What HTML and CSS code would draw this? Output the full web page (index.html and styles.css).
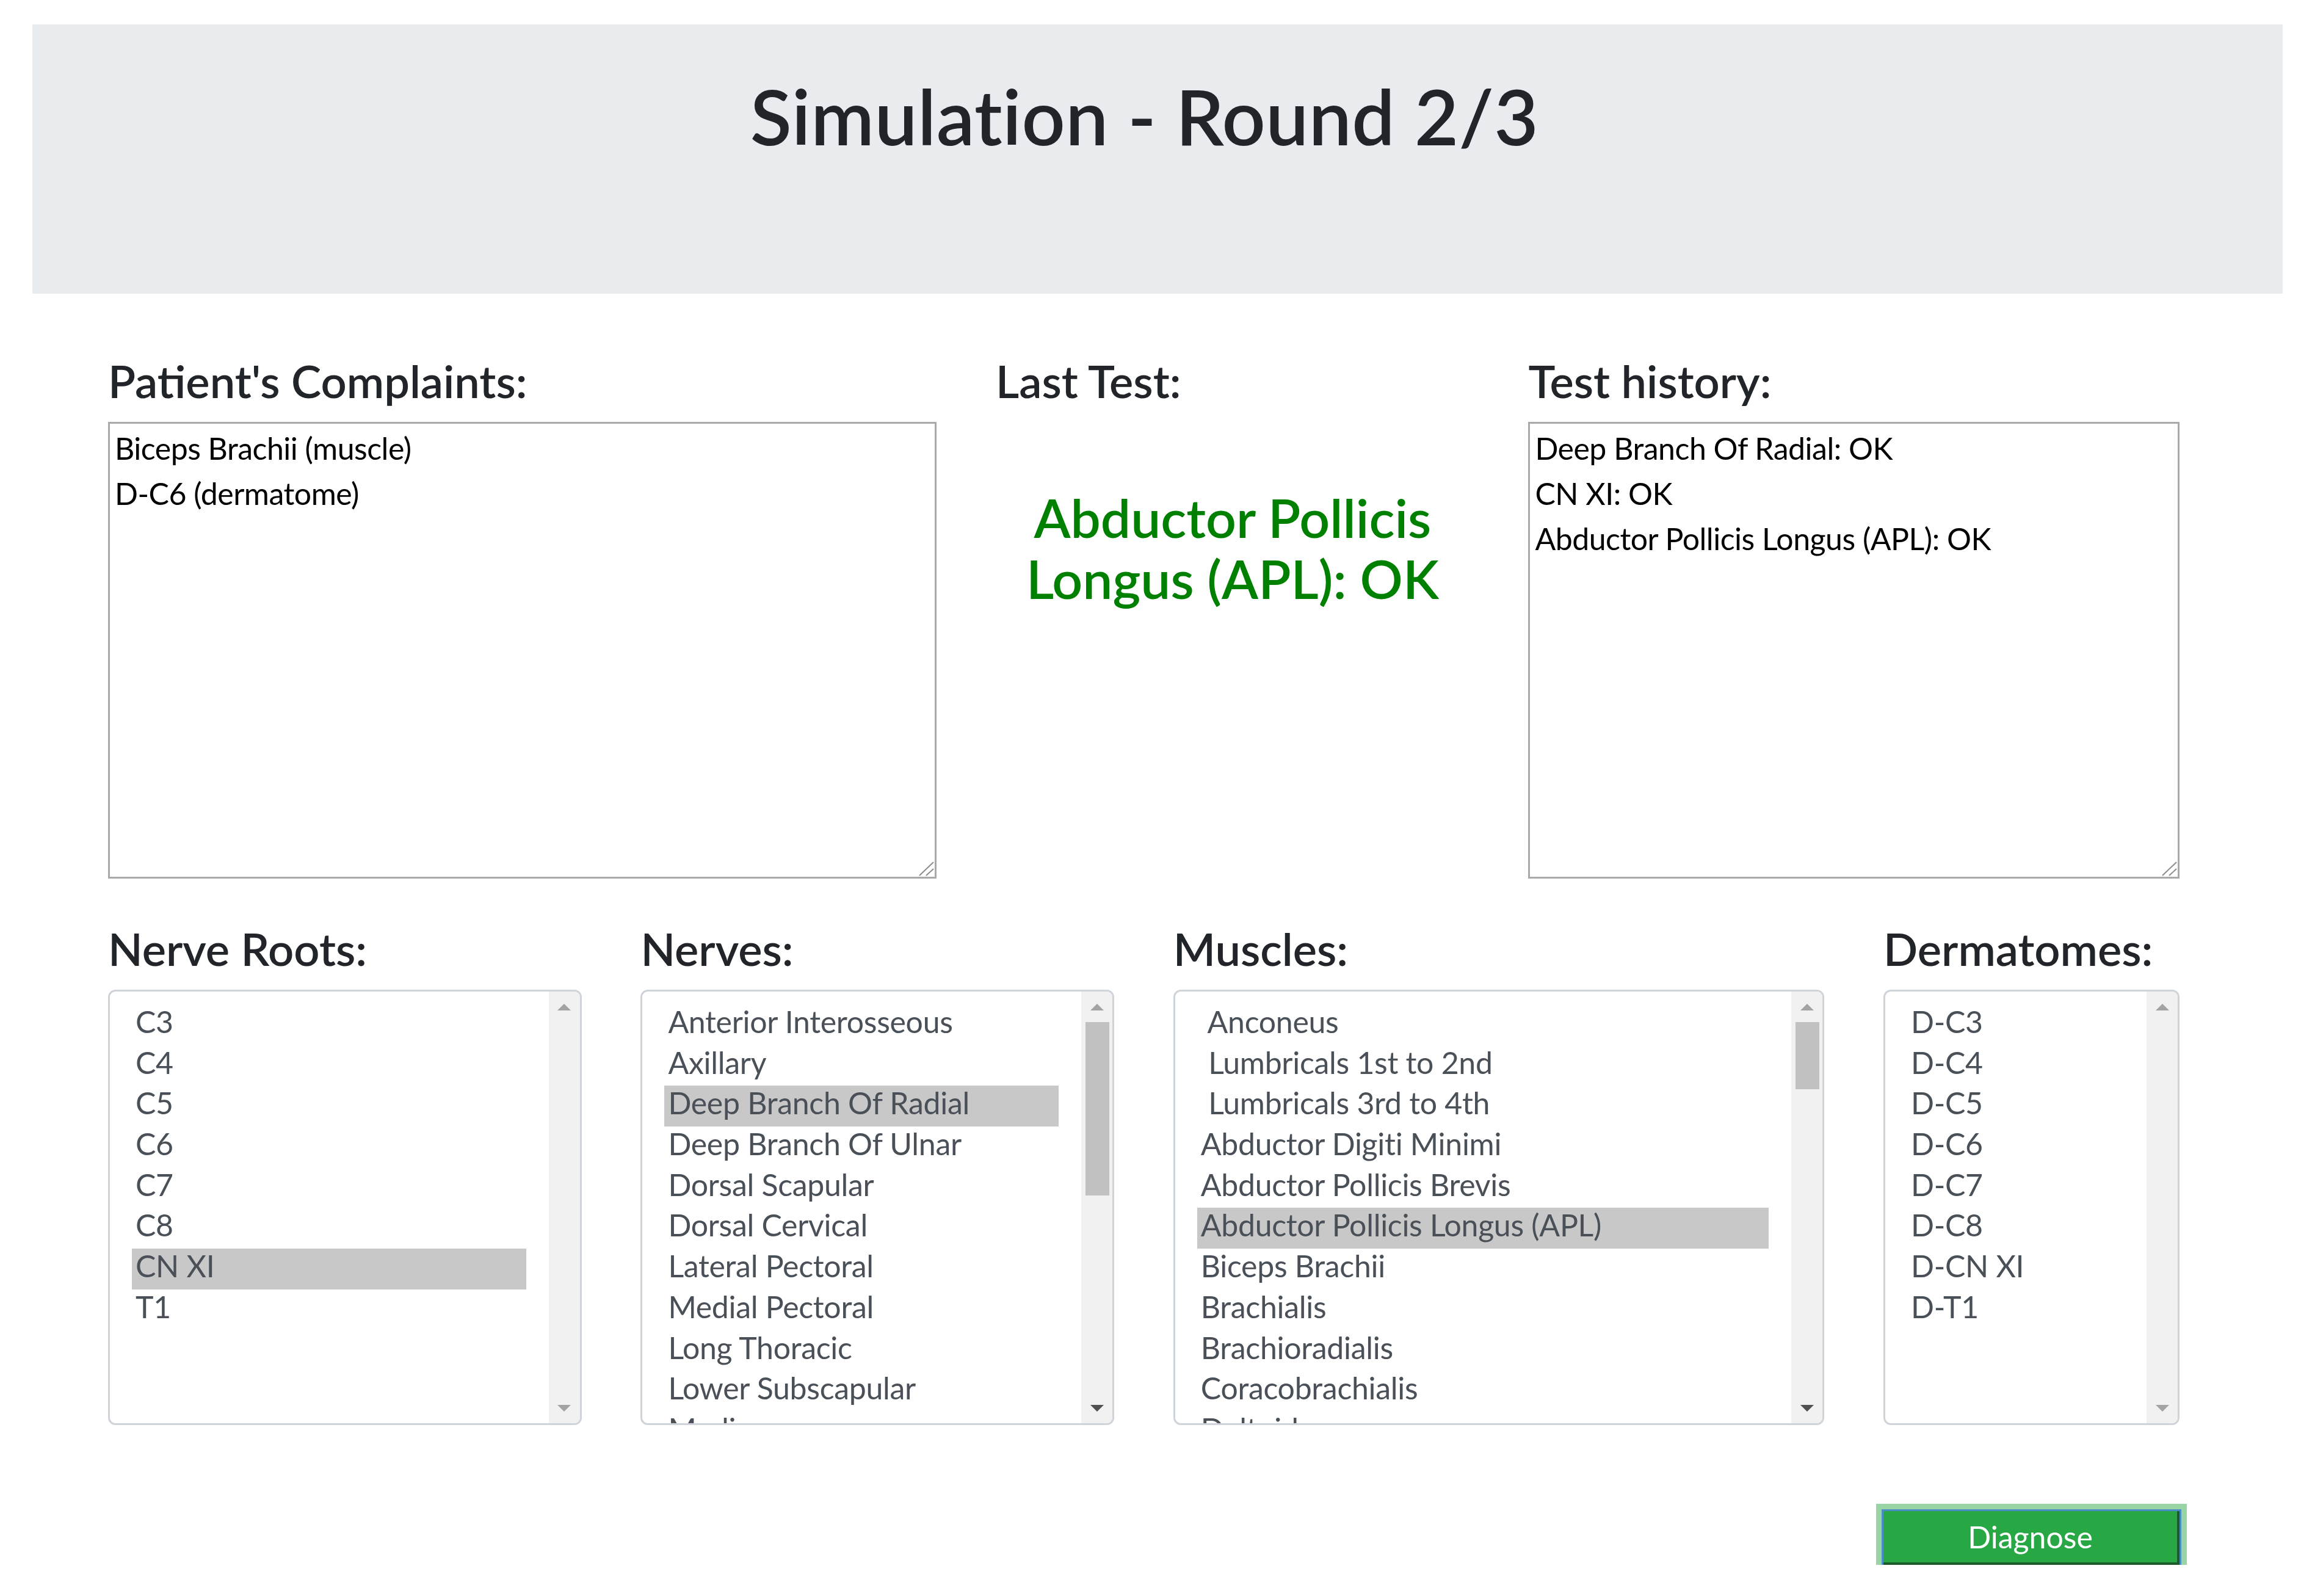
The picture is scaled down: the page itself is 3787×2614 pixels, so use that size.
FILE: index.html
```html
<!DOCTYPE html>
<html lang="en">
<head>
<meta charset="utf-8">
<title>Simulation - Round 2/3</title>
<link rel="stylesheet" href="styles.css">
</head>
<body>
<header class="jumbo">
  <h1 class="title">Simulation - Round 2/3</h1>
</header>
<main class="page">
  <section class="row top">
    <div class="col c5">
      <h4 class="label">Patient's Complaints:</h4>
      <div class="ta-wrap">
        <textarea class="ta" readonly>Biceps Brachii (muscle)
D-C6 (dermatome)</textarea>
        <svg class="grip" width="26" height="24" viewBox="0 0 26 24"><path d="M2 23 L25 1 M13 23 L25 12" stroke="#8c8c8c" stroke-width="2" fill="none"/></svg>
      </div>
    </div>
    <div class="col c3">
      <h4 class="label">Last Test:</h4>
      <p class="last">Abductor Pollicis Longus (APL): OK</p>
    </div>
    <div class="col c4">
      <h4 class="label">Test history:</h4>
      <div class="ta-wrap">
        <textarea class="ta" readonly>Deep Branch Of Radial: OK
CN XI: OK
Abductor Pollicis Longus (APL): OK</textarea>
        <svg class="grip" width="26" height="24" viewBox="0 0 26 24"><path d="M2 23 L25 1 M13 23 L25 12" stroke="#8c8c8c" stroke-width="2" fill="none"/></svg>
      </div>
    </div>
  </section>

  <section class="row lists">
    <div class="col c3">
      <h4 class="label">Nerve Roots:</h4>
      <div class="listbox">
        <div class="opts">
          <div class="opt">C3</div>
          <div class="opt">C4</div>
          <div class="opt">C5</div>
          <div class="opt">C6</div>
          <div class="opt">C7</div>
          <div class="opt">C8</div>
          <div class="opt sel">CN XI</div>
          <div class="opt">T1</div>
        </div>
        <div class="sbar">
          <div class="arrow"><svg width="22" height="11" viewBox="0 0 22 11"><path d="M0 11 L11 0 L22 11Z" fill="#a3a3a3"/></svg></div>
          <div class="arrow down"><svg width="22" height="11" viewBox="0 0 22 11"><path d="M0 0 L11 11 L22 0Z" fill="#a3a3a3"/></svg></div>
        </div>
      </div>
    </div>
    <div class="col c3">
      <h4 class="label">Nerves:</h4>
      <div class="listbox">
        <div class="opts">
          <div class="opt">Anterior Interosseous</div>
          <div class="opt">Axillary</div>
          <div class="opt sel">Deep Branch Of Radial</div>
          <div class="opt">Deep Branch Of Ulnar</div>
          <div class="opt">Dorsal Scapular</div>
          <div class="opt">Dorsal Cervical</div>
          <div class="opt">Lateral Pectoral</div>
          <div class="opt">Medial Pectoral</div>
          <div class="opt">Long Thoracic</div>
          <div class="opt">Lower Subscapular</div>
          <div class="opt">Median</div>
        </div>
        <div class="sbar">
          <div class="arrow"><svg width="22" height="11" viewBox="0 0 22 11"><path d="M0 11 L11 0 L22 11Z" fill="#a3a3a3"/></svg></div>
          <div class="thumb thumb-nerves"></div>
          <div class="arrow down"><svg width="22" height="11" viewBox="0 0 22 11"><path d="M0 0 L11 11 L22 0Z" fill="#505050"/></svg></div>
        </div>
      </div>
    </div>
    <div class="col c4">
      <h4 class="label">Muscles:</h4>
      <div class="listbox">
        <div class="opts">
          <div class="opt">&nbsp;Anconeus</div>
          <div class="opt">&nbsp;Lumbricals 1st to 2nd</div>
          <div class="opt">&nbsp;Lumbricals 3rd to 4th</div>
          <div class="opt">Abductor Digiti Minimi</div>
          <div class="opt">Abductor Pollicis Brevis</div>
          <div class="opt sel">Abductor Pollicis Longus (APL)</div>
          <div class="opt">Biceps Brachii</div>
          <div class="opt">Brachialis</div>
          <div class="opt">Brachioradialis</div>
          <div class="opt">Coracobrachialis</div>
          <div class="opt">Deltoid</div>
        </div>
        <div class="sbar">
          <div class="arrow"><svg width="22" height="11" viewBox="0 0 22 11"><path d="M0 11 L11 0 L22 11Z" fill="#a3a3a3"/></svg></div>
          <div class="thumb thumb-muscles"></div>
          <div class="arrow down"><svg width="22" height="11" viewBox="0 0 22 11"><path d="M0 0 L11 11 L22 0Z" fill="#505050"/></svg></div>
        </div>
      </div>
    </div>
    <div class="col c2">
      <h4 class="label">Dermatomes:</h4>
      <div class="listbox">
        <div class="opts">
          <div class="opt">D-C3</div>
          <div class="opt">D-C4</div>
          <div class="opt">D-C5</div>
          <div class="opt">D-C6</div>
          <div class="opt">D-C7</div>
          <div class="opt">D-C8</div>
          <div class="opt">D-CN XI</div>
          <div class="opt">D-T1</div>
        </div>
        <div class="sbar">
          <div class="arrow"><svg width="22" height="11" viewBox="0 0 22 11"><path d="M0 11 L11 0 L22 11Z" fill="#a3a3a3"/></svg></div>
          <div class="arrow down"><svg width="22" height="11" viewBox="0 0 22 11"><path d="M0 0 L11 11 L22 0Z" fill="#a3a3a3"/></svg></div>
        </div>
      </div>
    </div>
  </section>

  <section class="row actions">
    <div class="btn-col">
      <button class="btn" type="button">Diagnose</button>
    </div>
  </section>
</main>
</body>
</html>
```

FILE: styles.css
```css
* { box-sizing: border-box; }

html, body {
  margin: 0;
  background: #ffffff;
}

body {
  font-family: Lato, "Liberation Sans", sans-serif;
  color: #212529;
}

/* ---------- header ---------- */
.jumbo {
  margin: 40px 48px 0 53px;
  height: 441px;
  background: #e9ecef;
  padding: 75px 169px 0 126px;
}

.title {
  margin: 0;
  font-size: 125px;
  font-weight: 600;
  line-height: 150px;
  letter-spacing: 0.4px;
  text-align: center;
  color: #212529;
}

/* ---------- grid ---------- */
.page {
  margin-left: 177px;
  width: 3393px;
}

.row {
  display: grid;
  grid-template-columns: repeat(12, 1fr);
  column-gap: 96.6px;
}

.top { margin-top: 100px; }
.lists { margin-top: 72px; }
.actions { margin-top: 141px; }

.c5 { grid-column: span 5; }
.c4 { grid-column: span 4; }
.c3 { grid-column: span 3; }
.c2 { grid-column: span 2; }
.btn-col { grid-column: 11 / span 2; }

.label {
  margin: 0 0 24px;
  font-size: 74px;
  font-weight: 600;
  line-height: 86px;
  color: #212529;
}

/* ---------- textareas ---------- */
.ta-wrap {
  position: relative;
  height: 748px;
}

.ta {
  display: block;
  width: 100%;
  height: 100%;
  margin: 0;
  border: 3px solid #a9a9a9;
  padding: 3px 8px;
  font-family: Lato, "Liberation Sans", sans-serif;
  font-size: 50px;
  line-height: 74px;
  letter-spacing: -0.5px;
  color: #000000;
  background: #ffffff;
  resize: none;
  overflow: hidden;
  outline: none;
}

.grip {
  position: absolute;
  right: 4px;
  bottom: 4px;
}

/* ---------- last test ---------- */
.last {
  margin: 131px 0 0;
  font-size: 87.5px;
  font-weight: 600;
  line-height: 100px;
  color: #008000;
  text-align: center;
}

/* ---------- list boxes ---------- */
.listbox {
  display: flex;
  height: 713px;
  border: 3px solid #ced4da;
  border-radius: 12px;
  overflow: hidden;
  background: #ffffff;
}

.opts {
  flex: 1;
  min-width: 0;
  padding: 21px 37px 0 36px;
  overflow: hidden;
}

.opt {
  height: 66.7px;
  padding: 0 0 9.3px 6px;
  line-height: 57.4px;
  font-size: 50px;
  letter-spacing: -0.3px;
  color: #495057;
  white-space: nowrap;
}

.opt.sel { background: #c8c8c8; }

.sbar {
  flex: none;
  width: 51px;
  background: #f1f1f1;
  display: flex;
  flex-direction: column;
}

.arrow {
  height: 50px;
  display: flex;
  align-items: center;
  justify-content: center;
  flex: none;
}

.arrow svg { display: block; }

.arrow.down { margin-top: auto; }

.thumb {
  flex: none;
  margin: 0 5px 0 7px;
  background: #c1c1c1;
}

.thumb-nerves { height: 284px; }
.thumb-muscles { height: 110px; }

/* ---------- button ---------- */
.btn {
  display: flex;
  align-items: center;
  justify-content: center;
  width: 100%;
  height: 88px;
  margin: 0;
  padding: 0;
  border: 0;
  border-right: 4px solid #1c5a2b;
  border-bottom: 4px solid #1c5a2b;
  background: #28a745;
  color: #ffffff;
  font-family: Lato, "Liberation Sans", sans-serif;
  font-size: 50px;
  font-weight: 400;
  line-height: 1;
  box-shadow: 0 0 0 3px #4a8cc8, 0 0 0 12px #98d4a4;
}
```
